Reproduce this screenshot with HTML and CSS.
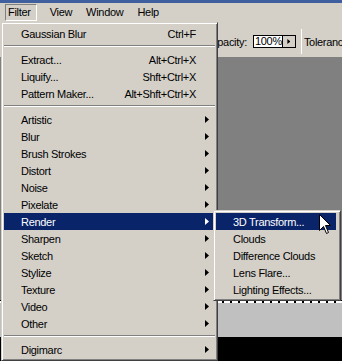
FILE: index.html
```html
<!DOCTYPE html>
<html lang="en">
<head>
  <meta charset="UTF-8">
  <title>Filter menu</title>
  <link rel="stylesheet" href="styles.css">
</head>
<body>
  <div class="screen">
    <div class="titlebar"></div>

    <div class="menubar">
      <span class="mb-item open">Filter</span>
      <span class="mb-item">View</span>
      <span class="mb-item">Window</span>
      <span class="mb-item">Help</span>
    </div>

    <div class="options">
      <span class="opt-label">Opacity:</span>
      <span class="opt-field">
        <span class="opt-value">100%</span>
        <span class="opt-btn"><span class="arrow"></span></span>
      </span>
      <span class="opt-sep"></span>
      <span class="opt-label">Tolerance:</span>
    </div>

    <div class="workspace">
      <div class="canvas-gray"></div>
      <div class="ruler"></div>
      <div class="canvas-light"></div>
      <div class="canvas-black"></div>
    </div>

    <!-- Filter menu -->
    <div class="menu main-menu">
      <div class="item"><span class="label">Gaussian Blur</span><span class="key">Ctrl+F</span></div>
      <div class="sep"></div>
      <div class="item"><span class="label">Extract...</span><span class="key">Alt+Ctrl+X</span></div>
      <div class="item"><span class="label">Liquify...</span><span class="key">Shft+Ctrl+X</span></div>
      <div class="item"><span class="label">Pattern Maker...</span><span class="key">Alt+Shft+Ctrl+X</span></div>
      <div class="sep"></div>
      <div class="item"><span class="label">Artistic</span><span class="arrow"></span></div>
      <div class="item"><span class="label">Blur</span><span class="arrow"></span></div>
      <div class="item"><span class="label">Brush Strokes</span><span class="arrow"></span></div>
      <div class="item"><span class="label">Distort</span><span class="arrow"></span></div>
      <div class="item"><span class="label">Noise</span><span class="arrow"></span></div>
      <div class="item"><span class="label">Pixelate</span><span class="arrow"></span></div>
      <div class="item active"><span class="label">Render</span><span class="arrow"></span></div>
      <div class="item"><span class="label">Sharpen</span><span class="arrow"></span></div>
      <div class="item"><span class="label">Sketch</span><span class="arrow"></span></div>
      <div class="item"><span class="label">Stylize</span><span class="arrow"></span></div>
      <div class="item"><span class="label">Texture</span><span class="arrow"></span></div>
      <div class="item"><span class="label">Video</span><span class="arrow"></span></div>
      <div class="item"><span class="label">Other</span><span class="arrow"></span></div>
      <div class="sep"></div>
      <div class="item"><span class="label">Digimarc</span><span class="arrow"></span></div>
    </div>

    <!-- Render submenu -->
    <div class="menu sub-menu">
      <div class="item active"><span class="label">3D Transform...</span></div>
      <div class="item"><span class="label">Clouds</span></div>
      <div class="item"><span class="label">Difference Clouds</span></div>
      <div class="item"><span class="label">Lens Flare...</span></div>
      <div class="item"><span class="label">Lighting Effects...</span></div>
    </div>

    <svg class="cursor" width="13" height="21" viewBox="0 0 13 21">
      <path d="M0.5 0.5 L0.5 16.5 L4.5 12.5 L7.5 19.5 L9.5 18.5 L6.5 11.5 L11.5 11.5 Z" fill="#fff" stroke="#000" stroke-width="1"/>
    </svg>
  </div>
</body>
</html>
```

FILE: styles.css
```css
body {
  margin: 0;
  padding: 0;
  background: #d4d0c8;
  font-family: "Liberation Sans", Arial, sans-serif;
  font-size: 11px;
  letter-spacing: -0.3px;
  color: #000;
  overflow: hidden;
}
.screen {
  position: relative;
  width: 342px;
  height: 361px;
  overflow: hidden;
}
.titlebar {
  height: 3px;
  background: #3f5f9f;
}

/* menu bar */
.menubar {
  height: 19px;
  display: flex;
  align-items: center;
  padding-left: 5px;
  background: #d4d0c8;
}
.mb-item {
  height: 17px;
  line-height: 17px;
  padding: 0 6px;
  box-sizing: border-box;
  border: 1px solid transparent;
  line-height: 15px;
}
.mb-item.open {
  border-color: #808080 #fff #fff #808080;
  padding: 0 5px 0 2px;
  margin-right: 6px;
}

/* options bar */
.options {
  height: 35px;
  box-sizing: border-box;
  padding: 4px 0 0 209px;
  display: flex;
  align-items: center;
  white-space: nowrap;
}
.opt-label {
  margin-right: 6px;
}
.opt-field {
  display: flex;
  width: 46px;
  height: 13px;
  box-sizing: border-box;
  border: 1px solid #000;
  background: #fff;
}
.opt-value {
  flex: 1;
  line-height: 11px;
  padding-left: 1px;
}
.opt-btn {
  width: 12px;
  border-left: 1px solid #000;
  background: #d4d0c8;
  display: flex;
  align-items: center;
  justify-content: center;
}
.opt-sep {
  width: 1px;
  height: 25px;
  margin: 0 2px 0 5px;
  background: #808080;
  border-right: 1px solid #fff;
}

/* workspace */
.canvas-gray {
  height: 243px;
  background: #808080;
}
.ruler {
  height: 3px;
  border-top: 1px solid #000;
  box-sizing: border-box;
  background: repeating-linear-gradient(to right, #fff 0 6px, #000 6px 8px);
}
.canvas-light {
  height: 34px;
  background: #c0c0c0;
}
.canvas-black {
  height: 40px;
  background: #000;
}

/* drop-down menus */
.menu {
  position: absolute;
  box-sizing: border-box;
  background: #d4d0c8;
  border: 1px solid;
  border-color: #d4d0c8 #404040 #404040 #d4d0c8;
  box-shadow: inset 1px 1px #fff, inset -1px -1px #808080;
  padding: 2px 4px 2px 2px;
}
.main-menu {
  left: 1px;
  top: 22px;
  width: 217px;
}
.sub-menu {
  left: 213px;
  top: 210px;
  width: 128px;
}
.item {
  height: 17px;
  display: flex;
  align-items: center;
  padding-left: 17px;
  white-space: nowrap;
}
.item .label {
  flex: 1;
}
.item .key {
  margin-right: 17px;
}
.item.active {
  background: #0a246a;
  color: #fff;
}
.arrow {
  display: inline-block;
  width: 4px;
  height: 7px;
  background: currentColor;
  clip-path: polygon(0 0, 100% 50%, 0 100%);
}
.item .arrow {
  margin-right: 4px;
}
.opt-btn .arrow {
  width: 3px;
  height: 5px;
}
.sep {
  height: 9px;
  box-sizing: border-box;
  padding-top: 3px;
  margin-right: -2px;
}
.sep::before {
  content: "";
  display: block;
  border-top: 1px solid #808080;
  border-bottom: 1px solid #fff;
}

.cursor {
  position: absolute;
  left: 319px;
  top: 214px;
}
```
